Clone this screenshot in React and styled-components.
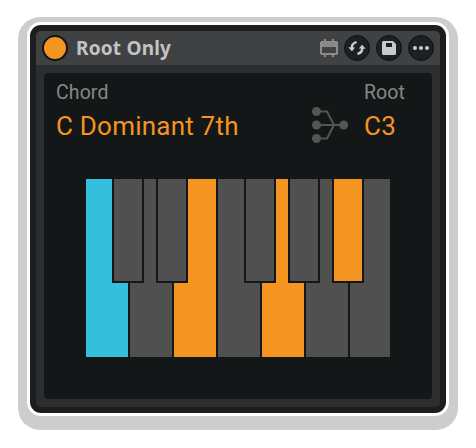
import React from "react";
import styled, { createGlobalStyle } from "styled-components";

const GlobalStyle = createGlobalStyle`
  * { box-sizing: border-box; }
  body { margin: 0; background: #fff; overflow: hidden; }
`;

const Page = styled.main`
  width: 476px;
  height: 448px;
  padding: 17px 17px 18px 18px;
  background: #fff;
  font-family: Roboto, "Noto Sans", sans-serif;
`;

const Halo = styled.div`
  width: 440px;
  height: 413px;
  padding: 5px 9px 14px;
  border-radius: 22px;
  background: #cdcdcd;
`;

const Device = styled.section`
  width: 422px;
  height: 394px;
  border: 3px solid #fff;
  border-radius: 14px;
  background: #fff;
`;

const Frame = styled.div`
  height: 388px;
  padding: 6px;
  border-radius: 11px;
  background: #1c1d1f;
`;

const Body = styled.div`
  height: 376px;
  border-radius: 5px;
  overflow: hidden;
  background: #2c2d2f;
`;

const TitleBar = styled.header`
  display: flex;
  align-items: center;
  height: 34px;
  padding: 0 6px;
  background: #404143;
`;

const Power = styled.button`
  width: 26px;
  height: 26px;
  padding: 0;
  border: 2px solid #111517;
  border-radius: 50%;
  background: #f49421;
`;

const Title = styled.h1`
  margin: 0 auto 0 8px;
  color: #c3c3c3;
  font-family: "Noto Sans", "Open Sans", sans-serif;
  font-size: 19px;
  line-height: 26px;
  font-weight: 700;
  letter-spacing: 0.2px;
  white-space: nowrap;
`;

const Tools = styled.div`
  display: flex;
  align-items: center;
  gap: 6px;
`;

const ToolButton = styled.button`
  display: grid;
  place-items: center;
  width: 26px;
  height: 26px;
  padding: 0;
  border: 1px solid #0e1114;
  border-radius: 50%;
  background: #1b2025;
  svg { display: block; }
`;

const Display = styled.div`
  height: 326px;
  margin: 8px;
  padding: 6px 12px 0;
  border-radius: 4px;
  background: #131717;
`;

const Readouts = styled.div`
  display: flex;
  height: 100px;
`;

const Field = styled.div`
  width: ${(p) => p.$width};
  padding-top: 1px;
  white-space: nowrap;
`;

const Label = styled.div`
  color: #878787;
  font-size: 19.5px;
  line-height: 26px;
  letter-spacing: 0.1px;
`;

const Value = styled.div`
  margin-top: 3px;
  color: #f49421;
  font-size: 26px;
  line-height: 34px;
  letter-spacing: 0.22px;
`;

const Merge = styled.svg`
  display: block;
  flex: none;
  width: 38px;
  height: 38px;
  margin: 27px 14px 0 0;
`;

const Keyboard = styled.div`
  display: grid;
  grid-template-columns: repeat(152, 2px);
  grid-template-rows: 104px 74px;
  width: 304px;
  margin-left: 30px;
`;

const keyColors = { idle: "#505050", chord: "#f49421", root: "#34bfdd" };

const WhiteKey = styled.div`
  grid-area: 1 / ${(p) => p.$col} / 3 / span ${(p) => p.$span};
  background: ${(p) => keyColors[p.$state]};
`;

const BlackKey = styled.div`
  grid-area: 1 / ${(p) => p.$col} / 2 / span 16;
  z-index: 1;
  border: 2px solid #131717;
  border-top: 0;
  background: ${(p) => keyColors[p.$state]};
`;

const whites = ["root", "idle", "chord", "idle", "chord", "idle", "idle"];
const blacks = [
  [14, "idle"],
  [36, "idle"],
  [80, "idle"],
  [102, "idle"],
  [124, "chord"],
];

const ClipIcon = () => (
  <svg width="18" height="18" viewBox="0 0 18 18" fill="#8c8c8c" shapeRendering="crispEdges">
    <path d="M4 0h2v3H4zM12 0h2v3h-2zM4 16h2v2H4zM12 16h2v2h-2z" />
    <path fillRule="evenodd" d="M1 2h16v1h1v12h-1v1H1v-1H0V3h1zM2 8v6h14V8z" />
    <path fill="#6c7678" d="M3 4h1v1H3zM7 4h1v1H7zM10 4h1v1h-1zM14 4h1v1h-1zM5 6h1v1H5zM9 6h1v1H9zM12 6h1v1h-1z" />
  </svg>
);

const SwapIcon = () => (
  <svg width="18" height="16" viewBox="0 0 18 16" fill="none" stroke="#c8cdd0" strokeWidth="2.4">
    <path d="M8.6 2.1C5.4 2.8 3.7 4.8 3.7 8M9.4 13.9c3.2-.7 4.9-2.7 4.9-5.9" />
    <path fill="#c8cdd0" stroke="none" d="M.3 7.2 7.1 7.4 4 11.2zM17.7 8.8l-6.8-.2L14 4.8z" />
  </svg>
);

const SaveIcon = () => (
  <svg width="14" height="14" viewBox="0 0 14 14">
    <path fill="#c9c9c9" fillRule="evenodd" d="M1 0h10l3 3v10l-1 1H1l-1-1V1zM4 2v4h6V2z" />
  </svg>
);

const MoreIcon = () => (
  <svg width="16" height="4" viewBox="0 0 16 4" fill="#c8cdd0">
    <circle cx="2" cy="2" r="2" />
    <circle cx="8" cy="2" r="2" />
    <circle cx="14" cy="2" r="2" />
  </svg>
);

export default function App() {
  return (
    <Page>
      <GlobalStyle />
      <Halo>
        <Device>
          <Frame>
            <Body>
              <TitleBar>
                <Power aria-label="Toggle device" />
                <Title>Root Only</Title>
                <Tools>
                  <ClipIcon />
                  <ToolButton aria-label="Swap"><SwapIcon /></ToolButton>
                  <ToolButton aria-label="Save"><SaveIcon /></ToolButton>
                  <ToolButton aria-label="More"><MoreIcon /></ToolButton>
                </Tools>
              </TitleBar>
              <Display>
                <Readouts>
                  <Field $width="256px">
                    <Label>Chord</Label>
                    <Value>C Dominant 7th</Value>
                  </Field>
                  <Merge viewBox="0 0 38 38" fill="#555" stroke="#555" strokeWidth="2">
                    <path fill="none" d="M4 5.5h11L22 19l-7 13.5H4M4 19h28" />
                    <g stroke="none">
                      <circle cx="4.5" cy="5.5" r="4.5" />
                      <circle cx="4.5" cy="19" r="4.5" />
                      <circle cx="4.5" cy="32.5" r="4.5" />
                      <circle cx="31.7" cy="19" r="4.5" />
                    </g>
                  </Merge>
                  <Field $width="50px">
                    <Label>Root</Label>
                    <Value>C3</Value>
                  </Field>
                </Readouts>
                <Keyboard>
                  {whites.map((state, i) => (
                    <WhiteKey key={i} $col={i * 22 + 1} $span={i === 6 ? 20 : 21} $state={state} />
                  ))}
                  {blacks.map(([col, state]) => (
                    <BlackKey key={col} $col={col} $state={state} />
                  ))}
                </Keyboard>
              </Display>
            </Body>
          </Frame>
        </Device>
      </Halo>
    </Page>
  );
}
